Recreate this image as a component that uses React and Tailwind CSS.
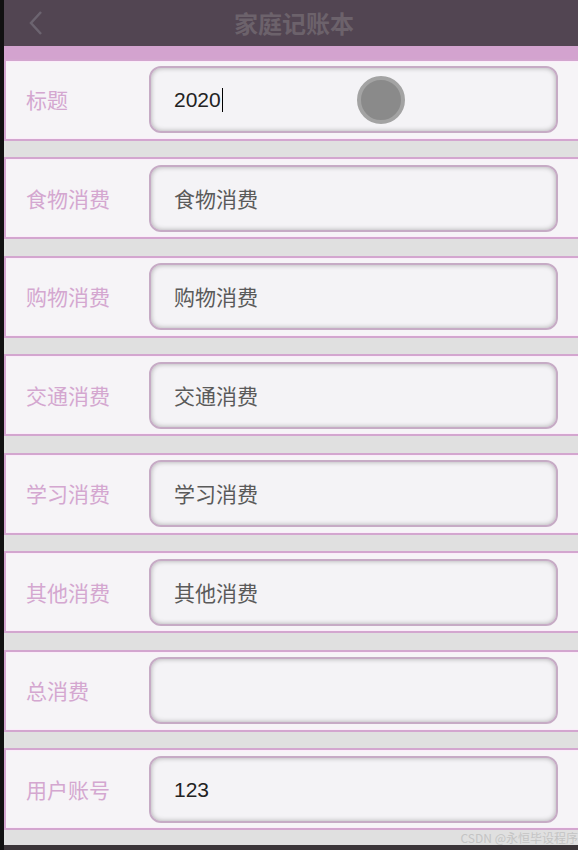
const fields = [
  { label: '标题', value: '2020', placeholder: '', caret: true },
  { label: '食物消费', value: '', placeholder: '食物消费' },
  { label: '购物消费', value: '', placeholder: '购物消费' },
  { label: '交通消费', value: '', placeholder: '交通消费' },
  { label: '学习消费', value: '', placeholder: '学习消费' },
  { label: '其他消费', value: '', placeholder: '其他消费' },
  { label: '总消费', value: '', placeholder: '' },
  { label: '用户账号', value: '123', placeholder: '' },
]

function Row({ label, value, placeholder, caret }) {
  return (
    <div className="flex h-[82px] items-center border-y-2 border-l-2 border-[#d3a6cf] bg-[#f6f4f7] pl-[20px] pr-[20px] shadow-[inset_0_1px_0_#fbecfa,inset_0_-1px_0_#fbecfa]">
      <span className="w-[123px] shrink-0 text-[21px] text-[#d4a7d0]">{label}</span>
      <div className="flex h-[67px] flex-1 items-center rounded-[12px] border-2 border-[#c6abc5] bg-[#f4f3f6] pl-[23px] shadow-[inset_0_0_5px_rgba(0,0,0,0.3)]">
        {value ? (
          <span className="flex items-center font-['Liberation_Sans',sans-serif] text-[21px] text-[#222]">
            {value}
            {caret && <span className="ml-[1px] inline-block h-[24px] w-[1.5px] bg-black" />}
          </span>
        ) : (
          <span className="text-[21px] text-[#5a5a5a]">{placeholder}</span>
        )}
      </div>
    </div>
  )
}

export default function App() {
  return (
    <div
      className="relative flex h-[850px] w-[578px] overflow-hidden bg-[#111]"
      style={{ fontFamily: '"Noto Sans CJK SC", "Liberation Sans", sans-serif' }}
    >
      <div className="ml-[4px] flex flex-1 flex-col bg-[#e0e0e0]">
        <header className="relative flex h-[47px] items-center justify-center bg-[#524552]">
          <svg className="absolute left-[24px] top-[10px]" width="16" height="26" viewBox="0 0 16 26">
            <path d="M13 2 L3 13 L13 24" fill="none" stroke="#6c6470" strokeWidth="2.5" />
          </svg>
          <h1 className="pl-[6px] text-[24px] font-bold text-[#6c626b]">家庭记账本</h1>
        </header>
        <div className="h-[13px] bg-[#d3a3cf]" />
        <div className="flex flex-col gap-[16.5px]">
          {fields.map(f => (
            <Row key={f.label} {...f} />
          ))}
        </div>
        <div className="relative mt-auto h-[15px]">
          <span className="absolute bottom-[1px] right-0 text-[12px] leading-none text-[#c4c4c4]">CSDN @永恒毕设程序</span>
        </div>
        <div className="h-[5px] bg-[#3b3539]" />
      </div>
      <div className="absolute left-[357px] top-[76px] h-[48px] w-[48px] rounded-full border-[4px] border-[#a3a3a3] bg-[#8a8a8a]" />
    </div>
  )
}
